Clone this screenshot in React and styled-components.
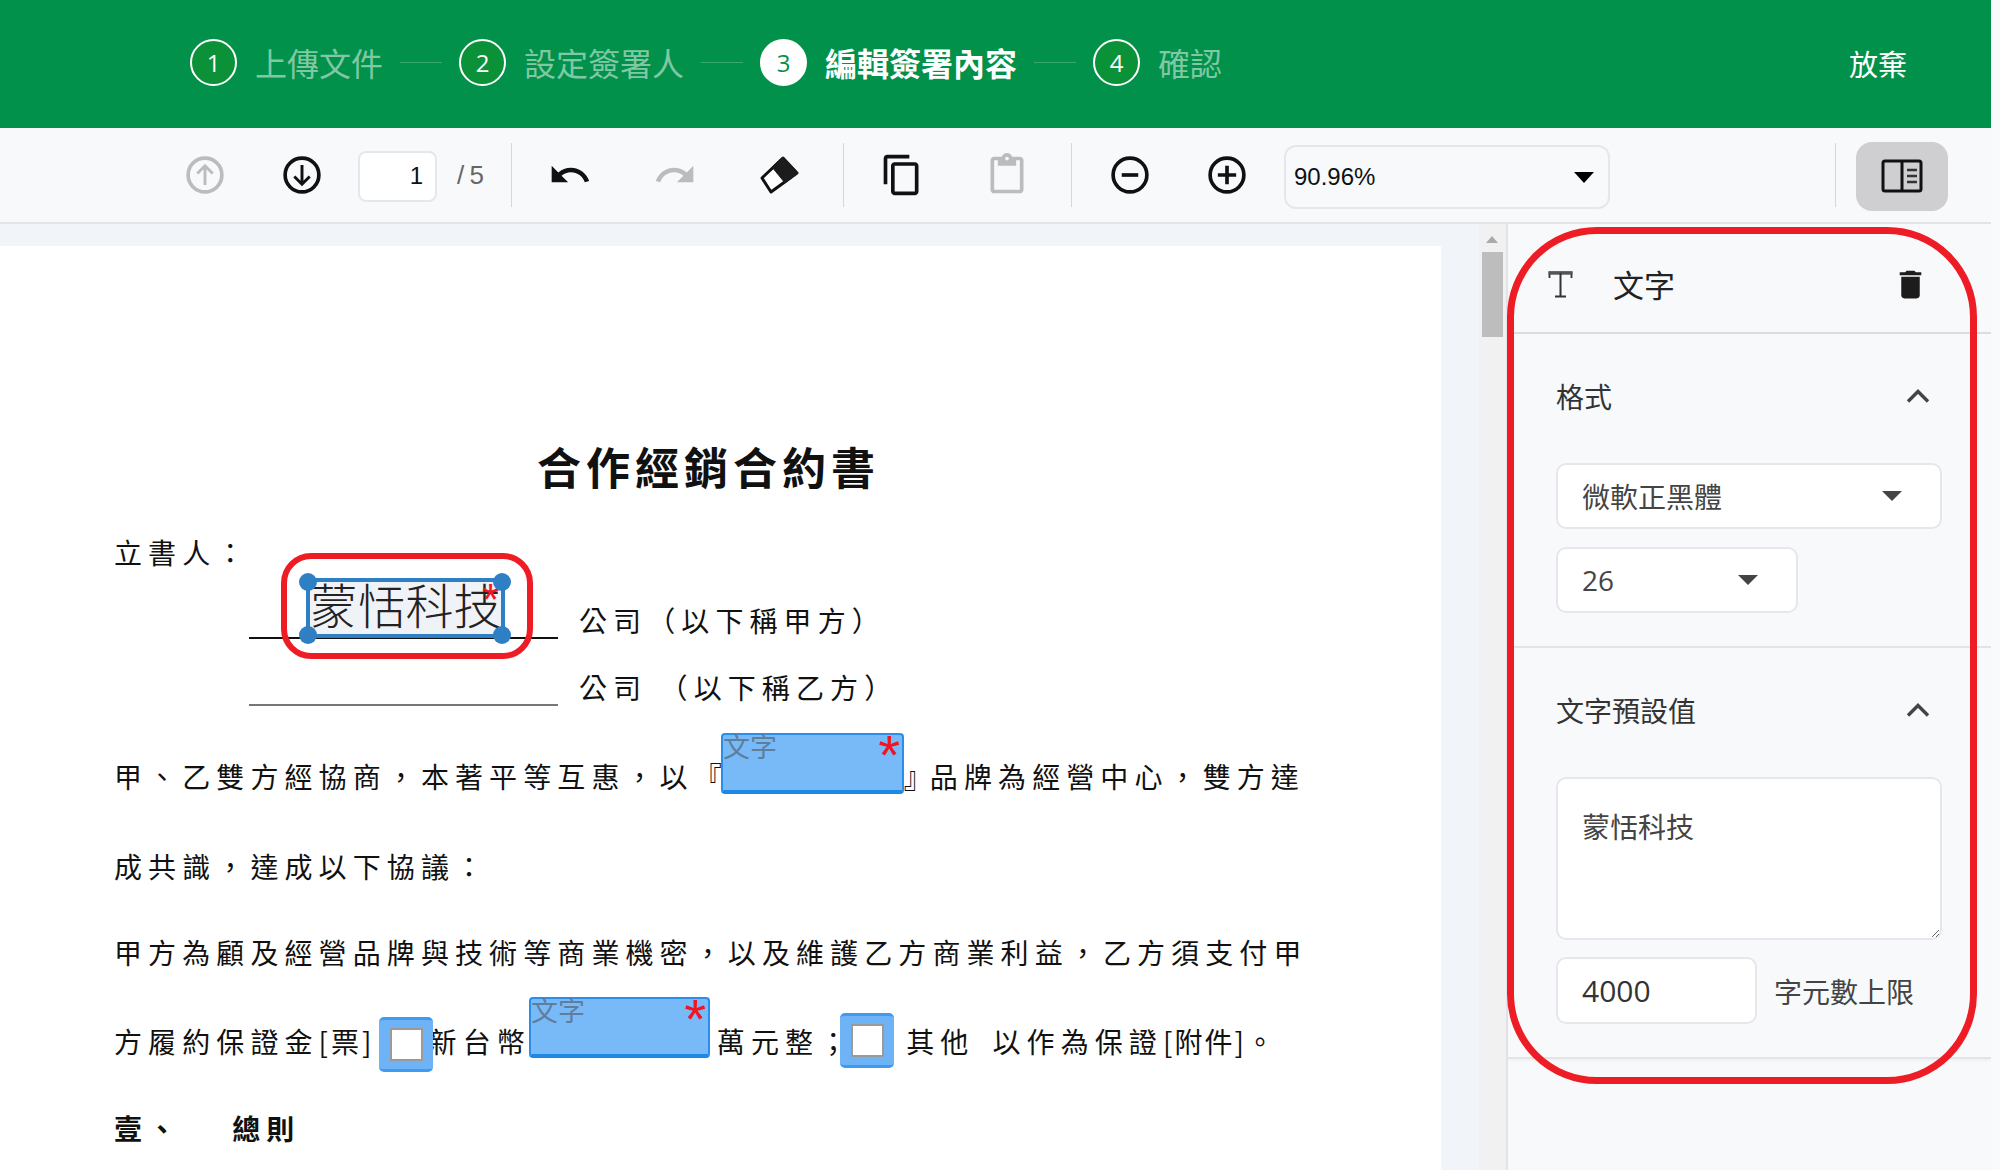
import React from 'react';
import styled, { createGlobalStyle } from 'styled-components';

const CJK = '"Noto Sans CJK TC", "Noto Sans CJK SC", sans-serif';
const UI = `"Open Sans", ${CJK}`;

const Global = createGlobalStyle`
  html, body { margin: 0; padding: 0; background: #f9fafc; }
  * { box-sizing: border-box; }
  body { font-family: ${CJK}; }
`;

const Frame = styled.div`
  width: 1991px;
  height: 1170px;
  display: flex;
  flex-direction: column;
  overflow: hidden;
`;

/* ---------- header ---------- */
const Header = styled.header`
  height: 128px;
  flex: none;
  background: #01914a;
  display: flex;
  align-items: center;
  padding: 0 84px 3px 190px;
`;
const StepCircle = styled.span`
  width: 47px;
  height: 47px;
  border-radius: 50%;
  flex: none;
  display: flex;
  align-items: center;
  justify-content: center;
  font: 400 24px ${UI};
  border: 2px solid #fff;
  color: ${p => (p.$active ? '#01914a' : '#fff')};
  background: ${p => (p.$active ? '#fff' : '#0b9138')};
`;
const StepLabel = styled.span`
  margin-left: 18px;
  font-size: 32px;
  line-height: 47px;
  font-weight: ${p => (p.$active ? 700 : 400)};
  color: ${p => (p.$active ? '#fff' : '#80c8a4')};
  white-space: nowrap;
`;
const StepLine = styled.span`
  width: 42px;
  height: 1px;
  margin: 0 17px;
  background: rgba(255, 255, 255, 0.22);
  flex: none;
`;
const Abandon = styled.button`
  margin-left: auto;
  border: 0;
  padding: 0;
  background: none;
  color: #fff;
  font: 400 29px ${CJK};
`;

/* ---------- toolbar ---------- */
const Toolbar = styled.div`
  height: 96px;
  flex: none;
  background: #f8f9fb;
  border-bottom: 2px solid #e3e4e8;
  display: flex;
  align-items: center;
  padding: 0 43px 0 183px;
`;
const ToolGroup = styled.div`
  display: flex;
  align-items: center;
  gap: ${p => p.$gap}px;
`;
const ToolIcon = styled.svg`
  width: 44px;
  height: 44px;
  flex: none;
  display: block;
  color: ${p => (p.$off ? '#bbbcbe' : '#111')};
`;
const PageBox = styled.div`
  width: 79px;
  height: 51px;
  margin: 2px 0 0 34px;
  background: #fff;
  border: 2px solid #e6e7eb;
  border-radius: 8px;
  display: flex;
  align-items: center;
  justify-content: flex-end;
  padding-right: 12px;
  font: 400 24px "Liberation Sans", sans-serif;
  color: #111;
`;
const PageTotal = styled.span`
  margin-left: 20px;
  width: 28px;
  font: 400 26px "Liberation Sans", sans-serif;
  color: #666;
  white-space: nowrap;
  letter-spacing: -1px;
`;
const ToolSep = styled.span`
  width: 1px;
  height: 64px;
  flex: none;
  background: #d6d7da;
  margin: 0 ${p => p.$right ?? 36}px 0 ${p => p.$left}px;
`;
const PushedSep = styled(ToolSep)`
  margin-left: auto;
`;
const ZoomSelect = styled.div`
  width: 326px;
  height: 64px;
  margin: 4px 0 0 35px;
  border: 2px solid #e6e7eb;
  border-radius: 12px;
  display: flex;
  align-items: center;
  justify-content: space-between;
  padding: 0 14px 0 8px;
  font: 400 24px "Liberation Sans", sans-serif;
  color: #111;
`;
const ZoomCaret = styled.span`
  width: 0;
  height: 0;
  border-left: 10px solid transparent;
  border-right: 10px solid transparent;
  border-top: 11px solid #000;
`;
const ToggleButton = styled.button`
  width: 92px;
  height: 69px;
  margin-top: 2px;
  border: 0;
  padding: 0;
  border-radius: 16px;
  background: #cfcfd1;
  display: flex;
  align-items: center;
  justify-content: center;
`;

/* ---------- workspace ---------- */
const Workspace = styled.div`
  flex: 1;
  min-height: 0;
  display: flex;
`;
const DocArea = styled.div`
  width: 1506px;
  flex: none;
  background: #f1f4f8;
  display: flex;
  padding-top: 22px;
  overflow: hidden;
`;
const DocPage = styled.div`
  position: relative;
  width: 1441px;
  height: 1100px;
  flex: none;
  background: #fff;
  padding: 191px 0 0 114px;
  color: #111;
  font-size: 28px;
`;
const ScrollTrack = styled.div`
  position: relative;
  width: 27px;
  margin: -22px 0 0 38px;
  flex: none;
  background: #f1f1f1;
`;
const ScrollArrow = styled.span`
  position: absolute;
  left: 7px;
  top: 12px;
  width: 0;
  height: 0;
  border-left: 6px solid transparent;
  border-right: 6px solid transparent;
  border-bottom: 7px solid #a9a9a9;
`;
const ScrollThumb = styled.span`
  position: absolute;
  left: 3px;
  top: 28px;
  width: 21px;
  height: 85px;
  background: #bdbdbd;
`;

const DocTitle = styled.h1`
  margin: 0 0 0 423px;
  height: 60px;
  font-size: 44px;
  line-height: 58px;
  letter-spacing: 5px;
  font-weight: 700;
  white-space: nowrap;
`;
const Row = styled.div`
  display: flex;
  height: 40px;
  line-height: 40px;
  margin-top: ${p => p.$top}px;
  white-space: nowrap;
  letter-spacing: 6.1px;
  font-weight: ${p => (p.$bold ? 700 : 400)};
  padding-left: ${p => p.$indent || 0}px;
`;
const Tight = styled.span`
  letter-spacing: ${p => p.$ls ?? 0}px;
`;
const Gap = styled.span`
  width: ${p => p.$w}px;
  flex: none;
`;
const SignLine = styled.span`
  width: 309px;
  flex: none;
  margin: 0 21px 1px 0;
  border-bottom: 2px solid ${p => p.$color};
`;

/* overlays placed on the PDF page */
const FieldBox = styled.div`
  position: absolute;
  left: ${p => p.$x}px;
  top: ${p => p.$y - 246}px;
  width: ${p => p.$w}px;
  height: ${p => p.$h}px;
  background: #78baf8;
  border: 2px solid #2a8df0;
  border-bottom: 4px solid #1e88e5;
  border-radius: 4px;
`;
const FieldName = styled.span`
  position: absolute;
  left: 0;
  top: -9px;
  font-size: 27px;
  line-height: 40px;
  color: #5f7d9c;
`;
const FieldStar = styled.span`
  position: absolute;
  right: 2px;
  top: -8px;
  font: 400 56px/1 "Liberation Sans", sans-serif;
  color: #f01520;
`;
const CheckBox = styled.div`
  position: absolute;
  left: ${p => p.$x}px;
  top: ${p => p.$y - 246}px;
  width: 54px;
  height: 55px;
  background: #6db3f5;
  border-top: 3px solid #3f9bf0;
  border-bottom: 3px solid #3f9bf0;
  border-radius: 5px;
  display: flex;
  align-items: center;
  justify-content: center;
`;
const CheckInner = styled.span`
  width: 33px;
  height: 33px;
  background: #fff;
  border: 2px solid #9a9a9a;
`;
const SelectedField = styled.div`
  position: absolute;
  left: 306px;
  top: ${578 - 246}px;
  width: 199px;
  height: 60px;
  background: #eff2f6;
  border: 4px solid #2f7fc4;
  display: flex;
  align-items: center;
  justify-content: center;
  padding-bottom: 10px;
  font-size: 48px;
  line-height: 1;
  font-weight: 300;
  letter-spacing: 0;
  color: #222;
  white-space: nowrap;
`;
const Handle = styled.span`
  position: absolute;
  width: 18px;
  height: 18px;
  border-radius: 50%;
  background: #2f7fc4;
  left: ${p => (p.$right ? '183px' : '-11px')};
  top: ${p => (p.$bottom ? '44px' : '-9px')};
`;
const SmallStar = styled.span`
  position: absolute;
  right: 2px;
  top: -4px;
  font: 400 44px/1 "Liberation Sans", sans-serif;
  color: #f01520;
`;
const CalloutSmall = styled.div`
  position: absolute;
  left: 281px;
  top: ${553 - 246}px;
  width: 252px;
  height: 106px;
  border: 6px solid #ee1c25;
  border-radius: 30px;
  pointer-events: none;
`;

/* ---------- side panel ---------- */
const Panel = styled.aside`
  position: relative;
  flex: 1;
  background: #f8f9fb;
  border-left: 2px solid #e3e4e8;
`;
const PanelHead = styled.div`
  height: 110px;
  display: flex;
  align-items: center;
  padding: 12px 62px 0 39px;
  border-bottom: 2px solid #dcdde1;
`;
const PanelTitle = styled.span`
  margin-left: 39px;
  font-size: 31px;
  line-height: 40px;
  color: #222;
`;
const Trash = styled.svg`
  width: 37px;
  height: 37px;
  margin-left: auto;
  color: #1c1c1c;
`;
const Section = styled.section`
  padding: 0 49px 33px 48px;
  border-bottom: 2px solid #e3e4e8;
  box-shadow: ${p => (p.$last ? '0 2px 3px rgba(0,0,0,.04)' : 'none')};
`;
const SectionHead = styled.div`
  height: 126px;
  margin-bottom: 3px;
  display: flex;
  align-items: center;
  justify-content: space-between;
  padding: 0 12px 2px 0;
  font-size: 28px;
  color: #333;
`;
const Chevron = styled.svg`
  width: 24px;
  height: 14px;
  color: #444;
`;
const SelectBox = styled.div`
  width: ${p => p.$w}px;
  height: 66px;
  margin-top: ${p => p.$top || 0}px;
  background: #fff;
  border: 2px solid #e6e7eb;
  border-radius: 10px;
  display: flex;
  align-items: center;
  justify-content: space-between;
  padding: 0 ${p => p.$pr}px 0 24px;
  font: 400 28px ${UI};
  color: #444;
`;
const Caret = styled.span`
  width: 0;
  height: 0;
  border-left: 10px solid transparent;
  border-right: 10px solid transparent;
  border-top: 10px solid #444;
`;
const TextBox = styled.textarea`
  display: block;
  width: 386px;
  height: 163px;
  margin: 0;
  padding: 32px 24px 20px;
  background: #fff;
  border: 2px solid #e6e7eb;
  border-radius: 10px;
  font: 400 28px/1.1 ${CJK};
  color: #444;
  outline: none;
`;
const LimitRow = styled.div`
  display: flex;
  align-items: center;
  margin-top: 17px;
  font-size: 28px;
  color: #444;
`;
const LimitInput = styled.input`
  width: 201px;
  height: 67px;
  margin-right: 17px;
  padding: 0 24px;
  background: #fff;
  border: 2px solid #e6e7eb;
  border-radius: 10px;
  font: 400 30px ${UI};
  color: #333;
  outline: none;
`;
const Callout = styled.div`
  position: absolute;
  left: -1px;
  top: 3px;
  width: 470px;
  height: 857px;
  border: 7px solid #ee1c25;
  border-radius: 90px;
  pointer-events: none;
`;

/* ---------- icons ---------- */
const CircleArrow = ({ dir, off }) => (
  <ToolIcon $off={off} viewBox="0 0 24 24" fill="none" stroke="currentColor" strokeWidth="2">
    <circle cx="12" cy="12" r="9.2" />
    {dir === 'up' ? <path d="M12 17.5V7M7.8 11.2 12 7l4.2 4.2" strokeWidth="1.6" /> : <path d="M12 6.5V17M7.8 12.8 12 17l4.2-4.2" strokeWidth="1.6" />}
  </ToolIcon>
);
const UNDO = 'M12.5 8c-2.65 0-5.05.99-6.9 2.6L2 7v9h9l-3.62-3.62c1.39-1.16 3.16-1.88 5.12-1.88 3.54 0 6.55 2.31 7.6 5.5l2.37-.78C21.08 11.03 17.15 8 12.5 8z';
const Undo = () => (
  <ToolIcon viewBox="0 0 24 24" fill="currentColor"><path d={UNDO} /></ToolIcon>
);
const Redo = () => (
  <ToolIcon $off viewBox="0 0 24 24" fill="currentColor"><path d={UNDO} transform="matrix(-1 0 0 1 24 0)" /></ToolIcon>
);
const Eraser = () => (
  <ToolIcon viewBox="-3 -4 44 44">
    <path d="M22 1 36 16 10 35 1 21z" fill="#fff" stroke="#111" strokeWidth="3" strokeLinejoin="round" />
    <path d="M22 0 37 16 24 26 11 10z" fill="#1c1c1c" stroke="#1c1c1c" strokeWidth="1" strokeLinejoin="round" />
  </ToolIcon>
);
const Copy = () => (
  <ToolIcon viewBox="0 0 24 24" fill="currentColor">
    <path d="M16 1H4c-1.1 0-2 .9-2 2v14h2V3h12V1zm3 4H8c-1.1 0-2 .9-2 2v14c0 1.1.9 2 2 2h11c1.1 0 2-.9 2-2V7c0-1.1-.9-2-2-2zm0 16H8V7h11v14z" />
  </ToolIcon>
);
const Paste = () => (
  <ToolIcon $off viewBox="0 0 24 24" fill="currentColor">
    <path d="M19 2h-4.18C14.4.84 13.3 0 12 0c-1.3 0-2.4.84-2.82 2H5c-1.1 0-2 .9-2 2v16c0 1.1.9 2 2 2h14c1.1 0 2-.9 2-2V4c0-1.1-.9-2-2-2zm-7 0c.55 0 1 .45 1 1s-.45 1-1 1-1-.45-1-1 .45-1 1-1zm7 18H5V4h2v3h10V4h2v16z" />
  </ToolIcon>
);
const CircleSign = ({ plus }) => (
  <ToolIcon viewBox="0 0 24 24" fill="none" stroke="currentColor" strokeWidth="2">
    <circle cx="12" cy="12" r="9.2" />
    <path d={plus ? 'M7 12h10M12 7v10' : 'M7.5 12h9'} />
  </ToolIcon>
);
const PanelToggleIcon = () => (
  <svg width="42" height="34" viewBox="0 0 42 34" fill="none" stroke="#111" strokeWidth="3">
    <rect x="2" y="2" width="38" height="30" rx="2" />
    <path d="M21 2v30" />
    <path d="M26 11h10M26 17h10M26 23h10" strokeWidth="2.4" stroke="#333" />
  </svg>
);
const TIcon = () => (
  <svg width="27" height="28" viewBox="0 0 27 28" fill="none" stroke="#333">
    <path d="M2.5 8V2.5h22V8" strokeWidth="1.8" />
    <path d="M1.5 3h24" strokeWidth="3.4" stroke="#555" />
    <path d="M13.5 3v23M8 26.5h11" strokeWidth="2" />
  </svg>
);
const UpChevron = () => (
  <Chevron viewBox="0 0 24 14" fill="none" stroke="currentColor" strokeWidth="3.4">
    <path d="M2 12.5 12 2.5l10 10" />
  </Chevron>
);

const steps = [
  ['1', '上傳文件'],
  ['2', '設定簽署人'],
  ['3', '編輯簽署內容', true],
  ['4', '確認'],
];

export default function App() {
  return (
    <Frame>
      <Global />
      <Header>
        {steps.map(([n, label, active], i) => (
          <React.Fragment key={n}>
            {i > 0 && <StepLine />}
            <StepCircle $active={active}>{n}</StepCircle>
            <StepLabel $active={active}>{label}</StepLabel>
          </React.Fragment>
        ))}
        <Abandon>放棄</Abandon>
      </Header>

      <Toolbar>
        <ToolGroup $gap={53}>
          <CircleArrow dir="up" off />
          <CircleArrow dir="down" />
        </ToolGroup>
        <PageBox>1</PageBox>
        <PageTotal>/ 5</PageTotal>
        <ToolSep $left={26} />
        <ToolGroup $gap={61}>
          <Undo />
          <Redo />
          <Eraser />
        </ToolGroup>
        <ToolSep $left={41} />
        <ToolGroup $gap={61}>
          <Copy />
          <Paste />
        </ToolGroup>
        <ToolSep $left={42} />
        <ToolGroup $gap={53}>
          <CircleSign />
          <CircleSign plus />
        </ToolGroup>
        <ZoomSelect>
          90.96%
          <ZoomCaret />
        </ZoomSelect>
        <PushedSep $left={0} $right={20} />
        <ToggleButton aria-label="panel">
          <PanelToggleIcon />
        </ToggleButton>
      </Toolbar>

      <Workspace>
        <DocArea>
          <DocPage>
            <DocTitle>合作經銷合約書</DocTitle>
            <Row $top={35}>立書人：</Row>
            <Row $top={28} $indent={135}>
              <SignLine $color="#111" />
              <span>公司（以下稱甲方）</span>
            </Row>
            <Row $top={27} $indent={135}>
              <SignLine $color="#777" />
              <span>公司 （以下稱乙方）</span>
            </Row>
            <Row $top={49}>
              <span>甲、乙雙方經協商，本著平等互惠，以『</span>
              <Gap $w={176} />
              <Tight $ls={-2}>』</Tight>
              <span>品牌為經營中心，雙方達</span>
            </Row>
            <Row $top={50}>成共識，達成以下協議：</Row>
            <Row $top={46}>甲方為顧及經營品牌與技術等商業機密，以及維護乙方商業利益，乙方須支付甲</Row>
            <Row $top={49}>
              <span>方履約保證金</span>
              <Tight $ls={3}>[票]</Tight>
              <Gap $w={54} />
              <span>新台幣</span>
              <Gap $w={186} />
              <span>萬元整；</span>
              <Gap $w={53} />
              <span>其他</span>
              <Gap $w={18} />
              <span>以作為保證</span>
              <Tight $ls={2}>[附件]</Tight>
              <span>。</span>
            </Row>
            <Row $top={47} $bold>
              <span>壹、</span>
              <Gap $w={50} />
              <span>總則</span>
            </Row>

            <SelectedField>
              蒙恬科技
              <SmallStar>*</SmallStar>
              <Handle />
              <Handle $right />
              <Handle $bottom />
              <Handle $right $bottom />
            </SelectedField>
            <CalloutSmall />
            <FieldBox $x={721} $y={733} $w={183} $h={61}>
              <FieldName>文字</FieldName>
              <FieldStar>*</FieldStar>
            </FieldBox>
            <FieldBox $x={529} $y={997} $w={181} $h={61}>
              <FieldName>文字</FieldName>
              <FieldStar>*</FieldStar>
            </FieldBox>
            <CheckBox $x={379} $y={1017}>
              <CheckInner />
            </CheckBox>
            <CheckBox $x={840} $y={1013}>
              <CheckInner />
            </CheckBox>
          </DocPage>
          <ScrollTrack>
            <ScrollArrow />
            <ScrollThumb />
          </ScrollTrack>
        </DocArea>

        <Panel>
          <PanelHead>
            <TIcon />
            <PanelTitle>文字</PanelTitle>
            <Trash viewBox="0 0 24 24" fill="currentColor">
              <path d="M6 19c0 1.1.9 2 2 2h8c1.1 0 2-.9 2-2V7H6v12zM19 4h-3.5l-1-1h-5l-1 1H5v2h14V4z" />
            </Trash>
          </PanelHead>
          <Section>
            <SectionHead>
              格式
              <UpChevron />
            </SectionHead>
            <SelectBox $w={386} $pr={38}>
              微軟正黑體
              <Caret />
            </SelectBox>
            <SelectBox $w={242} $pr={38} $top={18}>
              26
              <Caret />
            </SelectBox>
          </Section>
          <Section $last>
            <SectionHead>
              文字預設值
              <UpChevron />
            </SectionHead>
            <TextBox readOnly defaultValue="蒙恬科技" />
            <LimitRow>
              <LimitInput readOnly defaultValue="4000" />
              字元數上限
            </LimitRow>
          </Section>
          <Callout />
        </Panel>
      </Workspace>
    </Frame>
  );
}
